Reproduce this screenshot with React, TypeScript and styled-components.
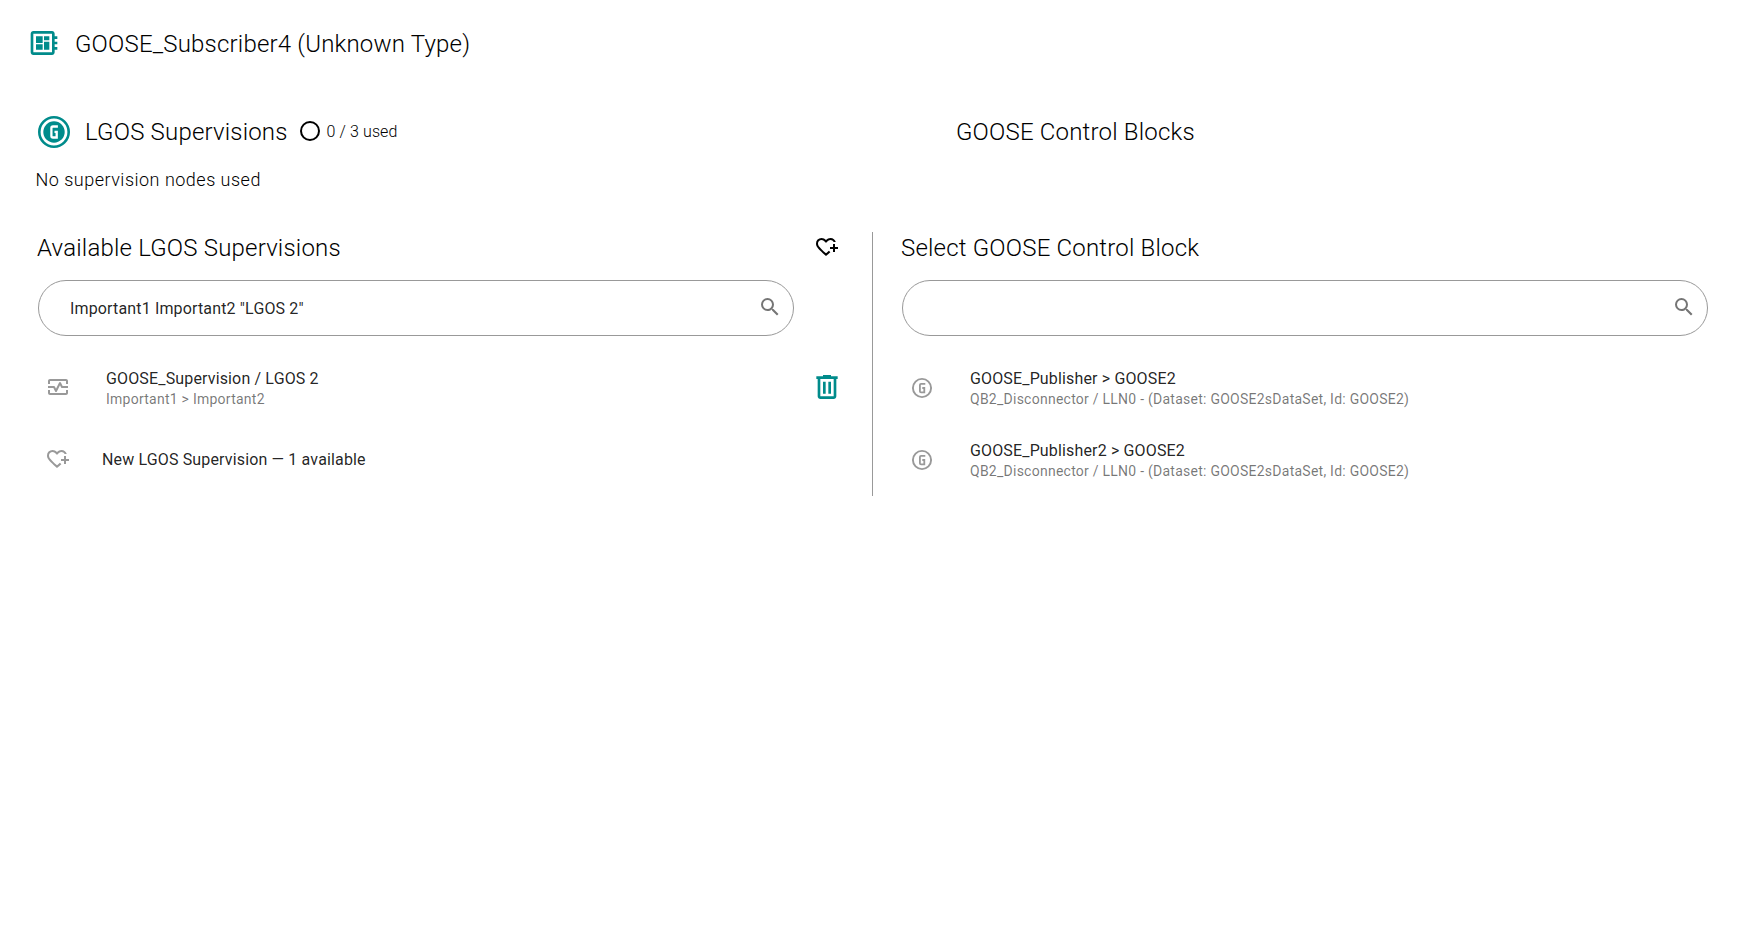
import React from "react";
import styled, { createGlobalStyle } from "styled-components";

const GlobalStyle = createGlobalStyle`
  body {
    margin: 0;
    background: #fff;
    color: #000;
    font-family: Roboto, sans-serif;
  }
  * { box-sizing: border-box; }
`;

const TEAL = "#008b8b";

const Page = styled.main`
  width: 1745px;
  height: 933px;
  overflow: hidden;
`;

const PageHeader = styled.header`
  display: flex;
  align-items: center;
  gap: 15px;
  height: 86px;
  padding-left: 28px;
  & > h1 { margin-top: 2px; }
`;

const Heading = styled.h1`
  margin: 0;
  font-size: 24px;
  font-weight: 300;
  line-height: 32px;
  letter-spacing: 0.19px;
  white-space: nowrap;
`;

const Summary = styled.section`
  display: grid;
  grid-template-columns: 956px 1fr;
  height: 146px;
  padding-top: 22px;
`;

const SummaryTitle = styled.div`
  display: flex;
  align-items: center;
  height: 48px;
  padding-left: 38px;
  & > h1 { margin-left: 15px; }
`;

const ControlTitle = styled.div`
  display: flex;
  align-items: center;
  height: 48px;
`;

const Usage = styled.div`
  display: flex;
  align-items: center;
  gap: 6px;
  margin: -2px 0 0 11px;
  font-size: 16px;
  font-weight: 300;
  letter-spacing: 0.1px;
`;

const EmptyNote = styled.p`
  margin: 12px 0 0 35.5px;
  font-size: 18px;
  font-weight: 300;
  line-height: 24px;
  letter-spacing: 0.49px;
`;

const Workspace = styled.section`
  display: grid;
  grid-template-columns: 873px 1fr;
  height: 263px;
`;

const Panel = styled.div<{ $divided?: boolean }>`
  padding-left: ${(p) => (p.$divided ? 37 : 28)}px;
  border-right: ${(p) => (p.$divided ? "1px solid #999" : "none")};
`;

const PanelHead = styled.div`
  display: flex;
  align-items: center;
  justify-content: space-between;
  height: 32px;
  padding-right: 33px;
  & > svg { margin-bottom: 2px; }
`;

const SearchField = styled.label<{ $width: number }>`
  display: flex;
  align-items: center;
  width: ${(p) => p.$width}px;
  height: 56px;
  margin: 16px 0 0 1px;
  padding: 0 11px 0 31px;
  border: 1px solid #999;
  border-radius: 28px;
`;

const SearchInput = styled.input`
  flex: 1;
  min-width: 0;
  padding: 0;
  border: 0;
  outline: 0;
  background: transparent;
  color: rgba(0, 0, 0, 0.87);
  font: 400 16px Roboto, sans-serif;
  letter-spacing: 0.15px;
`;

const List = styled.ul`
  margin: 0;
  padding: 16px 0 0 9px;
  list-style: none;
`;

const Item = styled.li<{ $single?: boolean; $raised?: boolean }>`
  display: flex;
  align-items: center;
  gap: ${(p) => (p.$single ? 32 : 36)}px;
  height: 72px;
  padding-right: 29px;
  color: #999;
  & > svg { margin-bottom: ${(p) => (p.$raised ? 2 : 0)}px; }
`;

const ItemText = styled.div<{ $single?: boolean }>`
  flex: 1;
  padding-top: ${(p) => (p.$single ? 0 : 2)}px;
`;

const Primary = styled.div`
  color: rgba(0, 0, 0, 0.87);
  font-size: 16px;
  line-height: 20px;
  letter-spacing: 0.15px;
`;

const Secondary = styled.div`
  color: rgba(0, 0, 0, 0.54);
  font-size: 14px;
  line-height: 20px;
  letter-spacing: 0.25px;
`;

const Glyph = styled.svg<{ $size?: number; $color?: string }>`
  display: block;
  flex: none;
  width: ${(p) => p.$size ?? 24}px;
  height: ${(p) => p.$size ?? 24}px;
  fill: ${(p) => p.$color ?? "currentColor"};
`;

const SearchGlyph = styled(Glyph)`
  margin-bottom: 2px;
`;

const BoardIcon = () => (
  <Glyph $size={32} $color={TEAL} viewBox="0 0 24 24">
    <path d="M22 9V7h-2V5c0-1.1-.9-2-2-2H4c-1.1 0-2 .9-2 2v14c0 1.1.9 2 2 2h14c1.1 0 2-.9 2-2v-2h2v-2h-2v-2h2v-2h-2V9h2zm-4 10H4V5h14v14zM6 13h5v4H6zm6-6h4v3h-4zM6 7h5v5H6zm6 4h4v6h-4z" />
  </Glyph>
);

const HeartPlusIcon = () => (
  <Glyph viewBox="0 -960 960 960">
    <path d="M440-120 313-234q-72-65-123.5-116t-85-96q-33.5-45-49-87T40-621q0-94 63-156.5T260-840q52 0 99 22t81 62q34-40 81-62t99-22q81 0 136 45.5T831-680h-85q-18-40-53-60t-73-20q-51 0-88 27.5T463-660h-46q-31-45-70.5-72.5T260-760q-57 0-98.5 39.5T120-621q0 33 14 67t50 78.5q36 44.5 98 104T440-228q26-23 61-53t56-50l57 57q-22 20-56 49.5T498-172l-58 52Zm280-160v-120H600v-80h120v-120h80v120h120v80H800v120h-80Z" />
  </Glyph>
);

const MonitorIcon = () => (
  <Glyph viewBox="0 0 24 24">
    <path d="M20 4H4c-1.1 0-2 .9-2 2v3h2V6h16v3h2V6c0-1.1-.9-2-2-2zM20 18H4v-3H2v3c0 1.1.9 2 2 2h16c1.1 0 2-.9 2-2v-3h-2v3z" />
    <path d="M14.89 7.55c-.34-.68-1.45-.68-1.79 0L10 13.76l-1.11-2.21A.988.988 0 0 0 8 11H2v2h5.38l1.72 3.45c.18.34.52.55.9.55s.72-.21.89-.55L14 10.24l1.11 2.21c.17.34.51.55.89.55h6v-2h-5.38l-1.73-3.45z" />
  </Glyph>
);

const TrashIcon = () => (
  <Glyph $size={32} $color={TEAL} viewBox="0 -960 960 960">
    <path d="M280-120q-33 0-56.5-23.5T200-200v-520h-40v-80h200v-40h240v40h200v80h-40v520q0 33-23.5 56.5T680-120H280Zm400-600H280v520h400v-520ZM360-280h80v-360h-80v360Zm160 0h80v-360h-80v360Z" />
  </Glyph>
);

const SearchIcon = () => (
  <SearchGlyph $color="#757575" viewBox="0 0 24 24">
    <path d="M15.5 14h-.79l-.28-.27A6.471 6.471 0 0 0 16 9.5 6.5 6.5 0 1 0 9.5 16c1.61 0 3.09-.59 4.23-1.57l.27.28v.79l5 4.99L20.49 19l-4.99-5zm-6 0C7.01 14 5 11.99 5 9.5S7.01 5 9.5 5 14 7.01 14 9.5 11.99 14 9.5 14z" />
  </SearchGlyph>
);

const GooseIcon = () => (
  <Glyph viewBox="0 0 24 24">
    <circle cx="12" cy="12" r="9.1" fill="none" stroke="currentColor" strokeWidth="1.9" />
    <path d="M15.3 7.9H11.1Q9.9 7.9 9.9 9.1V15.2Q9.9 16.4 11.1 16.4H14.3V12H12.3" fill="none" stroke="currentColor" strokeWidth="1.8" />
  </Glyph>
);

const GooseBadge = () => (
  <Glyph $size={32} $color={TEAL} viewBox="0 0 32 32">
    <circle cx="16" cy="16" r="14.7" fill="none" stroke={TEAL} strokeWidth="2.6" />
    <circle cx="16" cy="16" r="10.7" />
    <path d="M19.9 10.5H15Q13.4 10.5 13.4 12.1V19.9Q13.4 21.5 15 21.5H18.7V15.9H16.5" fill="none" stroke="#fff" strokeWidth="2.3" />
  </Glyph>
);

const UsageRing = () => (
  <Glyph $size={22} viewBox="0 0 22 22">
    <circle cx="11" cy="11" r="9" fill="none" stroke="#000" strokeWidth="2" />
  </Glyph>
);

const controlBlocks = ["GOOSE_Publisher > GOOSE2", "GOOSE_Publisher2 > GOOSE2"];

export default function App() {
  return (
    <Page>
      <GlobalStyle />
      <PageHeader>
        <BoardIcon />
        <Heading>GOOSE_Subscriber4 (Unknown Type)</Heading>
      </PageHeader>
      <Summary>
        <div>
          <SummaryTitle>
            <GooseBadge />
            <Heading>LGOS Supervisions</Heading>
            <Usage>
              <UsageRing />
              <span>0 / 3 used</span>
            </Usage>
          </SummaryTitle>
          <EmptyNote>No supervision nodes used</EmptyNote>
        </div>
        <ControlTitle>
          <Heading>GOOSE Control Blocks</Heading>
        </ControlTitle>
      </Summary>
      <Workspace>
        <Panel $divided>
          <PanelHead>
            <Heading>Available LGOS Supervisions</Heading>
            <HeartPlusIcon />
          </PanelHead>
          <SearchField $width={756}>
            <SearchInput defaultValue={'Important1 Important2 "LGOS 2"'} />
            <SearchIcon />
          </SearchField>
          <List>
            <Item $raised>
              <MonitorIcon />
              <ItemText>
                <Primary>GOOSE_Supervision / LGOS 2</Primary>
                <Secondary>Important1 &gt; Important2</Secondary>
              </ItemText>
              <TrashIcon />
            </Item>
            <Item $single $raised>
              <HeartPlusIcon />
              <ItemText $single>
                <Primary>New LGOS Supervision — 1 available</Primary>
              </ItemText>
            </Item>
          </List>
        </Panel>
        <Panel>
          <PanelHead>
            <Heading>Select GOOSE Control Block</Heading>
          </PanelHead>
          <SearchField $width={806}>
            <SearchInput defaultValue="" />
            <SearchIcon />
          </SearchField>
          <List>
            {controlBlocks.map((name) => (
              <Item key={name}>
                <GooseIcon />
                <ItemText>
                  <Primary>{name}</Primary>
                  <Secondary>QB2_Disconnector / LLN0 - (Dataset: GOOSE2sDataSet, Id: GOOSE2)</Secondary>
                </ItemText>
              </Item>
            ))}
          </List>
        </Panel>
      </Workspace>
    </Page>
  );
}
